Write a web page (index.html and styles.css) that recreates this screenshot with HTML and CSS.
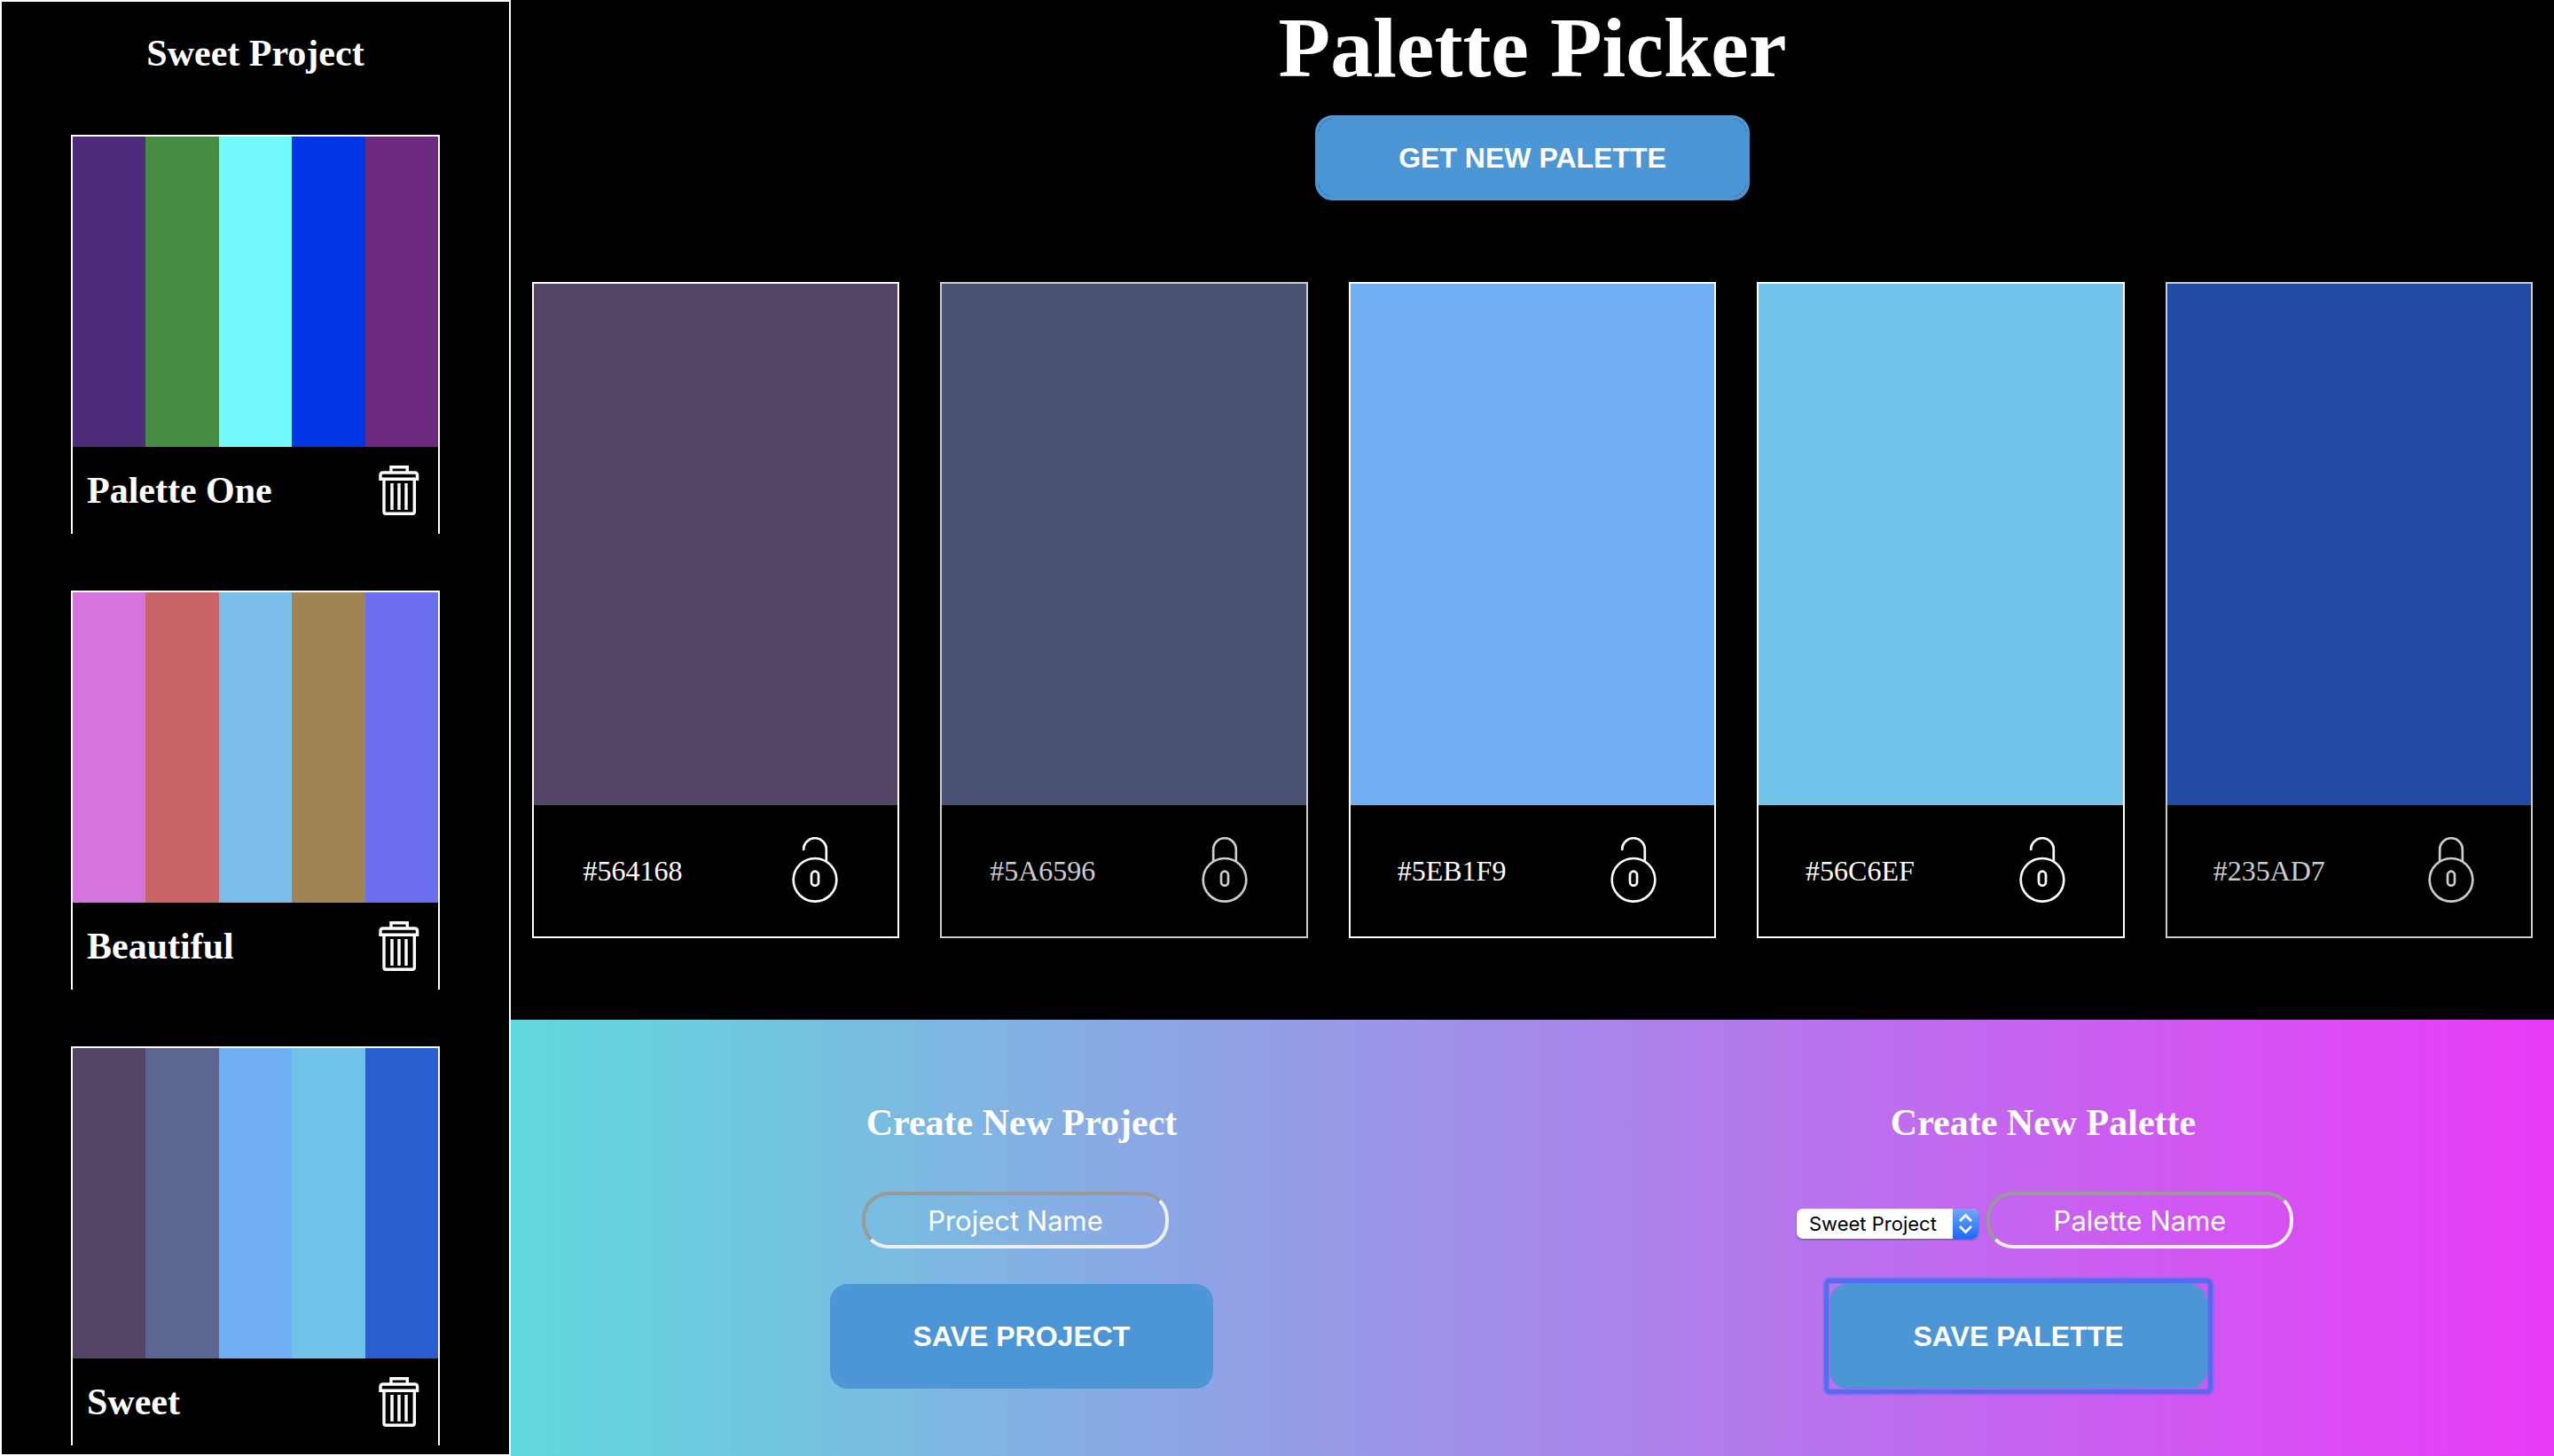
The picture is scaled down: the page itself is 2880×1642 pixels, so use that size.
FILE: index.html
```html
<!DOCTYPE html>
<html lang="en">
<head>
<meta charset="utf-8">
<title>Palette Picker</title>
<link rel="stylesheet" href="styles.css">
</head>
<body>
<svg class="sprite" aria-hidden="true">
  <symbol id="trash" viewBox="0 0 56 56">
    <g fill="none" stroke="currentColor" stroke-width="3.4">
      <path d="M19 8V1.700H37.300V8"/>
      <path d="M7 15.300V11q0-3 3-3h35.600q3 0 3 3v4.300z"/>
      <path d="M11 15.300V52.300q0 2 2 2H43.300q2 0 2-2V15.300"/>
      <path d="M20 20V50M28 20V50M36 20V50"/>
    </g>
  </symbol>
  <symbol id="unlocked" viewBox="0 0 76 76">
    <g fill="none" stroke="currentColor" stroke-width="2.7" stroke-linecap="round">
      <path d="M25.2 14V14a12.8 12.8 0 0 1 25.6 0V27"/>
      <circle cx="38" cy="48.3" r="24.3"/>
      <rect x="34" y="38.700" width="8" height="16" rx="4"/>
    </g>
  </symbol>
  <symbol id="locked" viewBox="0 0 76 76">
    <g fill="none" stroke="currentColor" stroke-width="2.7">
      <path d="M25.2 27V14a12.8 12.8 0 0 1 25.6 0V27"/>
      <circle cx="38" cy="48.3" r="24.3"/>
      <rect x="34" y="38.700" width="8" height="16" rx="4"/>
    </g>
  </symbol>
</svg>
<div class="app">
  <aside class="sidebar">
    <h2 class="heading">Sweet Project</h2>
    <div class="saved-list">
      <article class="saved">
        <div class="strip">
          <span style="background:#4e2c79"></span><span style="background:#478c45"></span><span style="background:#72f9fb"></span><span style="background:#0036e4"></span><span style="background:#6b2a7e"></span>
        </div>
        <div class="saved-footer">
          <h3 class="heading">Palette One</h3>
          <button class="icon-button" type="button" aria-label="Delete Palette One"><svg class="trash"><use href="#trash"/></svg></button>
        </div>
      </article>
      <article class="saved">
        <div class="strip">
          <span style="background:#d674de"></span><span style="background:#c86466"></span><span style="background:#7abde8"></span><span style="background:#a18452"></span><span style="background:#6b6eee"></span>
        </div>
        <div class="saved-footer">
          <h3 class="heading">Beautiful</h3>
          <button class="icon-button" type="button" aria-label="Delete Beautiful"><svg class="trash"><use href="#trash"/></svg></button>
        </div>
      </article>
      <article class="saved">
        <div class="strip">
          <span style="background:#544465"></span><span style="background:#5c6691"></span><span style="background:#70aff3"></span><span style="background:#72c3ea"></span><span style="background:#2a5dcf"></span>
        </div>
        <div class="saved-footer">
          <h3 class="heading">Sweet</h3>
          <button class="icon-button" type="button" aria-label="Delete Sweet"><svg class="trash"><use href="#trash"/></svg></button>
        </div>
      </article>
    </div>
  </aside>
  <main class="main">
    <header class="header">
      <h1 class="title">Palette Picker</h1>
      <button class="button" type="button">GET NEW PALETTE</button>
    </header>
    <section class="cards">
      <article class="card">
        <div class="swatch" style="background:#544465"></div>
        <div class="card-footer"><span>#564168</span><button class="icon-button" type="button" aria-label="Lock #564168"><svg class="lock"><use href="#unlocked"/></svg></button></div>
      </article>
      <article class="card card-locked">
        <div class="swatch" style="background:#5c6691"></div>
        <div class="card-footer"><span>#5A6596</span><button class="icon-button" type="button" aria-label="Unlock #5A6596"><svg class="lock"><use href="#locked"/></svg></button></div>
      </article>
      <article class="card">
        <div class="swatch" style="background:#70aff3"></div>
        <div class="card-footer"><span>#5EB1F9</span><button class="icon-button" type="button" aria-label="Lock #5EB1F9"><svg class="lock"><use href="#unlocked"/></svg></button></div>
      </article>
      <article class="card">
        <div class="swatch" style="background:#72c3ea"></div>
        <div class="card-footer"><span>#56C6EF</span><button class="icon-button" type="button" aria-label="Lock #56C6EF"><svg class="lock"><use href="#unlocked"/></svg></button></div>
      </article>
      <article class="card card-locked">
        <div class="swatch" style="background:#2a5dcf"></div>
        <div class="card-footer"><span>#235AD7</span><button class="icon-button" type="button" aria-label="Unlock #235AD7"><svg class="lock"><use href="#locked"/></svg></button></div>
      </article>
    </section>
    <section class="forms">
      <form class="form">
        <h2 class="heading">Create New Project</h2>
        <div class="fields fields-project">
          <input class="text-box" type="text" placeholder="Project Name" aria-label="Project Name">
        </div>
        <button class="button button-save" type="button">SAVE PROJECT</button>
      </form>
      <form class="form">
        <h2 class="heading">Create New Palette</h2>
        <div class="fields fields-palette">
          <div class="picker">
            <select class="select" aria-label="Project">
              <option>Sweet Project</option>
            </select>
            <svg class="picker-arrows" viewBox="0 0 29 34" aria-hidden="true"><path d="M8 14l6.500-6.500 6.500 6.500M8 20l6.500 6.500 6.500-6.500" fill="none" stroke="#fff" stroke-width="2.700"/></svg>
          </div>
          <input class="text-box" type="text" placeholder="Palette Name" aria-label="Palette Name">
        </div>
        <button class="button button-save button-focused" type="button">SAVE PALETTE</button>
      </form>
    </section>
  </main>
</div>
</body>
</html>
```
FILE: styles.css
```css
* {
  box-sizing: border-box;
}

body {
  margin: 0;
  background: #000;
  color: #fff;
  font-family: "Liberation Serif", "Times New Roman", serif;
  font-size: 32px;
}

h1, h2, h3 {
  margin: 0;
}

.sprite {
  display: none;
}

.app {
  display: grid;
  grid-template-columns: 1fr 4fr;
  min-height: 100vh;
}

.heading {
  font-size: 42px;
  line-height: 48px;
}

.sidebar {
  padding: 34px 78px 8px;
  border: 2px solid #fff;
  text-align: center;
}

.saved-list {
  display: grid;
  gap: 64px;
  margin-top: 68px;
}

.saved {
  border: 2px solid #fff;
  border-bottom: 0;
}

.strip {
  display: grid;
  grid-template-columns: repeat(5, 1fr);
  height: 350px;
}

.saved-footer {
  display: flex;
  align-items: center;
  justify-content: space-between;
  height: 98px;
  padding: 0 16px;
}

.icon-button {
  display: block;
  padding: 0;
  border: 0;
  background: none;
  color: inherit;
}

.trash {
  display: block;
  width: 56px;
  height: 56px;
}

.main {
  display: flex;
  flex-direction: column;
  min-width: 0;
}

.header {
  display: flex;
  flex-direction: column;
  align-items: center;
  gap: 22px;
}

.title {
  font-size: 96px;
  line-height: 108px;
}

.button {
  height: 96px;
  padding: 0 90px;
  border: 4px solid #4d96d5;
  border-radius: 20px;
  background: #4d96d5;
  background-clip: padding-box;
  color: #fff;
  font: bold 32px "Liberation Sans", Arial, sans-serif;
}

.cards {
  display: grid;
  grid-template-columns: repeat(5, 1fr);
  gap: 46px;
  padding: 92px 24px;
}

.card {
  border: 2px solid #fff;
}

.card-locked {
  opacity: 0.8;
}

.swatch {
  height: 588px;
}

.card-footer {
  display: flex;
  align-items: center;
  justify-content: space-around;
  height: 148px;
}

.lock {
  display: block;
  width: 76px;
  height: 76px;
}

.forms {
  display: grid;
  flex: 1;
  grid-template-columns: 1fr 1fr;
  padding: 92px 0 76px;
  background: linear-gradient(to right, #60d9dc, #e93bf7);
}

.form {
  display: flex;
  flex-direction: column;
  align-items: center;
}

.fields {
  display: flex;
  align-items: baseline;
  gap: 9px;
  margin: 54px 0 40px;
}

.fields-project {
  margin-right: 14px;
}

.fields-palette {
  margin-left: 4px;
}

.text-box {
  width: 346px;
  height: 64px;
  padding: 0 8px;
  border: 4px solid;
  border-color: #9a9a9a #eee #eee #9a9a9a;
  border-radius: 30px;
  background: transparent;
  color: #fff;
  font: 31px Inter, sans-serif;
  text-align: center;
}

.text-box::placeholder {
  color: #fff;
  opacity: 1;
}

.picker {
  display: flex;
  position: relative;
}

.select {
  width: 205px;
  height: 34px;
  padding: 0 30px 0 14px;
  border: 0;
  border-radius: 7px;
  background: #fff;
  box-shadow: 0 1px 2px rgba(0, 0, 0, 0.4);
  color: #000;
  font: 22px Inter, sans-serif;
  appearance: none;
}

.picker-arrows {
  position: absolute;
  top: 0;
  right: 0;
  width: 29px;
  height: 100%;
  border-radius: 0 7px 7px 0;
  background: linear-gradient(#6fa8f8, #1a6af8);
  pointer-events: none;
}

.button-save {
  height: 118px;
}

.button-focused {
  position: relative;
  margin-right: 56px;
}

.button-focused::after {
  content: "";
  position: absolute;
  inset: -10px;
  border: 5px solid rgba(64, 110, 238, 0.85);
  border-radius: 6px;
  box-shadow: 0 0 0 2px rgba(64, 110, 238, 0.3), inset 0 0 0 1px rgba(64, 110, 238, 0.3);
}
```
